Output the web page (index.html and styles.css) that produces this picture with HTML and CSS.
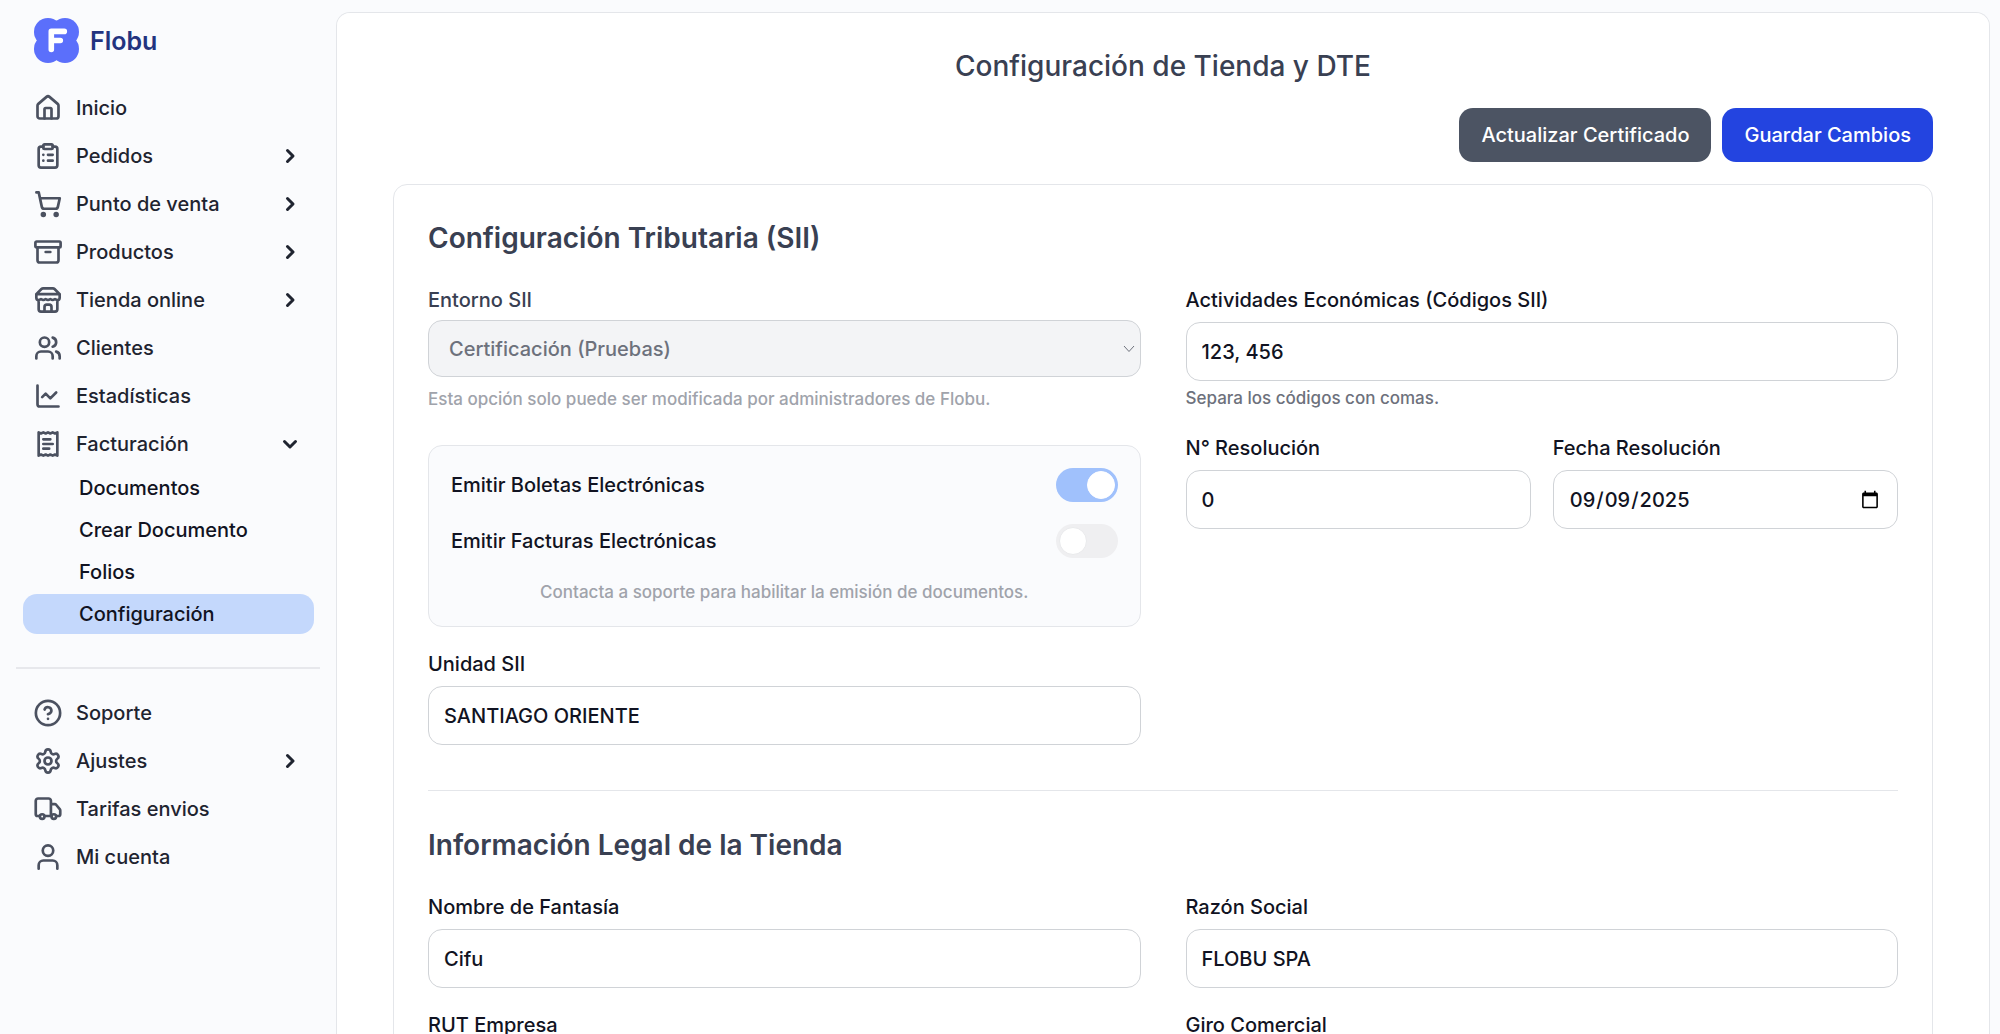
FILE: index.html
```html
<!DOCTYPE html>
<html lang="es">
<head>
<meta charset="utf-8">
<meta name="viewport" content="width=device-width, initial-scale=1">
<title>Flobu - Configuración</title>
<link rel="stylesheet" href="styles.css">
</head>
<body>
<div class="app">
  <aside class="sidebar">
    <a class="brand" href="#">
      <svg class="brand-mark" viewBox="0 0 45 45" aria-hidden="true">
        <g fill="#5b6ffb"><circle cx="14" cy="14" r="14"/><circle cx="31" cy="14" r="14"/><circle cx="14" cy="31" r="14"/><circle cx="31" cy="31" r="14"/></g>
        <path d="M17.300 31.500V13.400H30.300M17.300 22.500H26.300" fill="none" stroke="#fff" stroke-width="5.600" stroke-linecap="round" stroke-linejoin="round"/>
      </svg>
      <span>Flobu</span>
    </a>
    <nav class="menu" aria-label="Principal">
      <a class="item" href="#">
        <svg class="icon" viewBox="0 0 24 24"><path d="M15 21v-8a1 1 0 0 0-1-1h-4a1 1 0 0 0-1 1v8"/><path d="M3 10a2 2 0 0 1 .709-1.528l7-5.999a2 2 0 0 1 2.582 0l7 5.999A2 2 0 0 1 21 10v9a2 2 0 0 1-2 2H5a2 2 0 0 1-2-2z"/></svg>
        <span>Inicio</span>
      </a>
      <button class="item" type="button">
        <svg class="icon" viewBox="0 0 24 24"><rect width="8" height="4" x="8" y="2" rx="1"/><path d="M16 4h2a2 2 0 0 1 2 2v14a2 2 0 0 1-2 2H6a2 2 0 0 1-2-2V6a2 2 0 0 1 2-2h2M12 11h4M12 16h4M8 11h.01M8 16h.01"/></svg>
        <span>Pedidos</span>
        <svg class="chevron" viewBox="0 0 24 24"><path d="m9.500 6.500 5.500 5.500-5.500 5.500"/></svg>
      </button>
      <button class="item" type="button">
        <svg class="icon" viewBox="0 0 24 24"><circle cx="8" cy="21" r="1.200"/><circle cx="19" cy="21" r="1.200"/><path d="M2.050 2.050h2l2.660 12.420a2 2 0 0 0 2 1.580h9.780a2 2 0 0 0 1.950-1.570l1.650-7.430H5.120"/></svg>
        <span>Punto de venta</span>
        <svg class="chevron" viewBox="0 0 24 24"><path d="m9.500 6.500 5.500 5.500-5.500 5.500"/></svg>
      </button>
      <button class="item" type="button">
        <svg class="icon" viewBox="0 0 24 24"><rect width="21.600" height="5" x="1.200" y="3" rx="1"/><path d="M3 8v11a2 2 0 0 0 2 2h14a2 2 0 0 0 2-2V8M10 12h4"/></svg>
        <span>Productos</span>
        <svg class="chevron" viewBox="0 0 24 24"><path d="m9.500 6.500 5.500 5.500-5.500 5.500"/></svg>
      </button>
      <button class="item" type="button">
        <svg class="icon" viewBox="0 0 24 24"><path d="m2 7 4.410-4.410A2 2 0 0 1 7.830 2h8.340a2 2 0 0 1 1.420.590L22 7M4 12v8a2 2 0 0 0 2 2h12a2 2 0 0 0 2-2v-8M15 22v-4a2 2 0 0 0-2-2h-2a2 2 0 0 0-2 2v4M2 7h20M22 7v3a2 2 0 0 1-2 2 2.700 2.700 0 0 1-1.590-.630.700.700 0 0 0-.820 0A2.700 2.700 0 0 1 16 12a2.700 2.700 0 0 1-1.590-.630.700.700 0 0 0-.820 0A2.700 2.700 0 0 1 12 12a2.700 2.700 0 0 1-1.590-.630.700.700 0 0 0-.820 0A2.700 2.700 0 0 1 8 12a2.700 2.700 0 0 1-1.590-.630.700.700 0 0 0-.820 0A2.700 2.700 0 0 1 4 12a2 2 0 0 1-2-2V7"/></svg>
        <span>Tienda online</span>
        <svg class="chevron" viewBox="0 0 24 24"><path d="m9.500 6.500 5.500 5.500-5.500 5.500"/></svg>
      </button>
      <a class="item" href="#">
        <svg class="icon" viewBox="0 0 24 24"><path d="M16 21v-2a4 4 0 0 0-4-4H6a4 4 0 0 0-4 4v2M22 21v-2a4 4 0 0 0-3-3.870M16 3.130a4 4 0 0 1 0 7.750"/><circle cx="9" cy="7" r="4"/></svg>
        <span>Clientes</span>
      </a>
      <a class="item" href="#">
        <svg class="icon" viewBox="0 0 24 24"><path d="M3 3v16a2 2 0 0 0 2 2h16"/><path d="m19 9-5 5-4-4-3 3"/></svg>
        <span>Estadísticas</span>
      </a>
      <button class="item" type="button" aria-expanded="true">
        <svg class="icon" viewBox="0 0 24 24"><path d="M4 2v20l2-1 2 1 2-1 2 1 2-1 2 1 2-1 2 1V2l-2 1-2-1-2 1-2-1-2 1-2-1-2 1ZM14 8H8M16 12H8M13 16H8"/></svg>
        <span>Facturación</span>
        <svg class="chevron" viewBox="0 0 24 24"><path d="m6.500 9.500 5.500 5.500 5.500-5.500"/></svg>
      </button>
      <div class="submenu">
        <a class="subitem" href="#">Documentos</a>
        <a class="subitem" href="#">Crear Documento</a>
        <a class="subitem" href="#">Folios</a>
        <a class="subitem current" href="#" aria-current="page">Configuración</a>
      </div>
    </nav>
    <nav class="menu secondary" aria-label="Cuenta">
      <a class="item" href="#">
        <svg class="icon" viewBox="0 0 24 24"><circle cx="12" cy="12" r="10.400"/><path d="M9.090 9a3 3 0 0 1 5.830 1c0 2-3 3-3 3M12 17h.01"/></svg>
        <span>Soporte</span>
      </a>
      <button class="item" type="button">
        <svg class="icon" viewBox="0 0 24 24"><path d="M9.671 4.136a2.340 2.340 0 0 1 4.659 0 2.340 2.340 0 0 0 3.319 1.915 2.340 2.340 0 0 1 2.330 4.033 2.340 2.340 0 0 0 0 3.831 2.340 2.340 0 0 1-2.330 4.033 2.340 2.340 0 0 0-3.319 1.915 2.340 2.340 0 0 1-4.659 0 2.340 2.340 0 0 0-3.320-1.915 2.340 2.340 0 0 1-2.330-4.033 2.340 2.340 0 0 0 0-3.831A2.340 2.340 0 0 1 6.350 6.051a2.340 2.340 0 0 0 3.319-1.915"/><circle cx="12" cy="12" r="3"/></svg>
        <span>Ajustes</span>
        <svg class="chevron" viewBox="0 0 24 24"><path d="m9.500 6.500 5.500 5.500-5.500 5.500"/></svg>
      </button>
      <a class="item" href="#">
        <svg class="icon" viewBox="0 0 24 24"><path d="M14.500 18V5a2 2 0 0 0-2-2h-9a2 2 0 0 0-2 2v11.500A1.500 1.500 0 0 0 3 18h2M9 18h6M19 18h2a1.500 1.500 0 0 0 1.500-1.500v-3.200a2 2 0 0 0-.44-1.250l-3.100-3.700a1.500 1.500 0 0 0-1.150-.550H14.500"/><circle cx="7" cy="18.500" r="2"/><circle cx="17" cy="18.500" r="2"/></svg>
        <span>Tarifas envios</span>
      </a>
      <a class="item" href="#">
        <svg class="icon" viewBox="0 0 24 24"><path d="M20 22v-3a4 4 0 0 0-4-4H8a4 4 0 0 0-4 4v3"/><circle cx="12" cy="6.500" r="4.500"/></svg>
        <span>Mi cuenta</span>
      </a>
    </nav>
  </aside>

  <main class="panel">
    <h1 class="page-title">Configuración de Tienda y DTE</h1>
    <div class="actions">
      <button class="button muted" type="button">Actualizar Certificado</button>
      <button class="button primary" type="submit" form="store-form">Guardar Cambios</button>
    </div>
    <form class="card" id="store-form">
      <section class="section">
        <h2 class="section-title">Configuración Tributaria (SII)</h2>
        <div class="columns">
          <div class="column">
            <div class="environment">
              <label class="label soft" for="environment">Entorno SII</label>
              <div class="select-wrap">
                <select class="select" id="environment" disabled>
                  <option>Certificación (Pruebas)</option>
                </select>
                <svg class="select-arrow" viewBox="0 0 12 8" aria-hidden="true"><path d="m1 1 5 5.500 5-5.500"/></svg>
              </div>
              <p class="hint light">Esta opción solo puede ser modificada por administradores de Flobu.</p>
            </div>
            <div class="issuing">
              <label class="switch-row">Emitir Boletas Electrónicas
                <input class="switch" type="checkbox" checked disabled>
              </label>
              <label class="switch-row">Emitir Facturas Electrónicas
                <input class="switch" type="checkbox" disabled>
              </label>
              <p class="hint light centered">Contacta a soporte para habilitar la emisión de documentos.</p>
            </div>
            <div class="field">
              <label class="label" for="unit">Unidad SII</label>
              <input class="input" id="unit" type="text" value="SANTIAGO ORIENTE">
            </div>
          </div>
          <div class="column">
            <div class="field">
              <label class="label" for="activities">Actividades Económicas (Códigos SII)</label>
              <input class="input" id="activities" type="text" value="123, 456">
              <p class="hint close">Separa los códigos con comas.</p>
            </div>
            <div class="pair">
              <div class="field">
                <label class="label" for="resolution">N° Resolución</label>
                <input class="input" id="resolution" type="text" inputmode="numeric" value="0">
              </div>
              <div class="field">
                <label class="label" for="resolution-date">Fecha Resolución</label>
                <input class="input" id="resolution-date" type="date" value="2025-09-09">
              </div>
            </div>
          </div>
        </div>
      </section>
      <section class="section divided">
        <h2 class="section-title">Información Legal de la Tienda</h2>
        <div class="columns">
          <div class="field">
            <label class="label" for="trade-name">Nombre de Fantasía</label>
            <input class="input" id="trade-name" type="text" value="Cifu">
          </div>
          <div class="field">
            <label class="label" for="legal-name">Razón Social</label>
            <input class="input" id="legal-name" type="text" value="FLOBU SPA">
          </div>
          <div class="field">
            <label class="label" for="rut">RUT Empresa</label>
            <input class="input" id="rut" type="text">
          </div>
          <div class="field">
            <label class="label" for="business">Giro Comercial</label>
            <input class="input" id="business" type="text">
          </div>
        </div>
      </section>
    </form>
  </main>
</div>
</body>
</html>
```
FILE: styles.css
```css
*, *::before, *::after { box-sizing: border-box; }

body {
  margin: 0;
  background: #fafbfd;
  color: #111322;
  font: 500 20px/28px Inter, "Liberation Sans", sans-serif;
}

h1, h2, p { margin: 0; }
a { color: inherit; text-decoration: none; }
button, input, select { font: inherit; color: inherit; }

.app {
  display: flex;
  height: 100vh;
}

/* Sidebar */
.sidebar {
  flex: 0 0 336px;
  padding: 18px 16px 0;
  color: #1f2430;
}
.brand {
  display: flex;
  align-items: center;
  gap: 11px;
  margin: 0 0 21px 18px;
  color: #22337f;
  font-size: 25px;
  font-weight: 600;
}
.brand-mark { width: 45px; height: 45px; }
.menu { display: flex; flex-direction: column; }
.item {
  display: flex;
  align-items: center;
  gap: 14px;
  padding: 10px 18px;
  border: 0;
  background: none;
  text-align: left;
  cursor: pointer;
}
.icon, .chevron {
  flex: none;
  fill: none;
  stroke: #4b5160;
  stroke-width: 2.3;
  stroke-linecap: round;
  stroke-linejoin: round;
}
.icon { width: 28px; height: 28px; }
.chevron {
  width: 24px;
  height: 24px;
  margin-left: auto;
  stroke: #1f2430;
  stroke-width: 3;
}
.submenu {
  display: flex;
  flex-direction: column;
  gap: 2px;
  padding: 0 6px 0 7px;
  color: #111322;
}
.subitem {
  padding: 6px 56px;
  border-radius: 14px;
}
.current { background: #c4d8fc; }
.secondary {
  margin-top: 33px;
  padding-top: 20px;
  border-top: 2px solid #e7e8ec;
}

/* Main panel */
.panel {
  flex: 1;
  min-width: 0;
  margin: 12px 10px 0 0;
  padding: 35px 56px;
  overflow-y: auto;
  scrollbar-width: none;
  border: 1px solid #e4e6ea;
  border-bottom: 0;
  border-radius: 14px 14px 0 0;
  background: #fff;
}
.page-title {
  color: #394052;
  font-size: 28px;
  font-weight: 500;
  line-height: 36px;
  text-align: center;
}
.actions {
  display: flex;
  justify-content: flex-end;
  gap: 11px;
  margin: 24px 0 22px;
}
.button {
  padding: 13px 22px;
  border: 0;
  border-radius: 14px;
  color: #fff;
  cursor: pointer;
}
.muted { background: #4c5463; }
.primary { background: #2344e0; }

.card {
  padding: 34px;
  border: 1px solid #e4e6ea;
  border-radius: 14px;
}
.divided {
  margin-top: 45px;
  padding-top: 35px;
  border-top: 1px solid #e4e6ea;
}
.section-title {
  margin-bottom: 29px;
  color: #394052;
  font-size: 28px;
  font-weight: 600;
  line-height: 38px;
}
.columns, .pair {
  display: grid;
  grid-template-columns: repeat(2, minmax(0, 1fr));
  gap: 23px 45px;
}
.pair { gap: 22px; margin-top: 24px; }

/* Fields */
.label { display: block; margin-bottom: 8px; }
.soft { margin-bottom: 6px; color: #394052; }
.input, .select {
  display: block;
  width: 100%;
  height: 59px;
  padding: 0 15px;
  border: 1px solid #d0d3d7;
  border-radius: 14px;
  background: #fff;
}
.select-wrap { position: relative; }
.select {
  height: 57px;
  padding: 0 20px;
  appearance: none;
  background: #f3f4f6;
  color: #6d717c;
  opacity: 1;
}
.select-arrow {
  position: absolute;
  top: 25px;
  right: 6px;
  width: 12px;
  height: 8px;
  fill: none;
  stroke: #6d717c;
}
.hint {
  margin-top: 10px;
  color: #6d717c;
  font-size: 17px;
  line-height: 24px;
}
.light { color: #a0a3ab; }
.close { margin-top: 5px; }
.centered { margin-top: 0; text-align: center; }

.issuing {
  display: flex;
  flex-direction: column;
  gap: 22px;
  margin: 34px 0 23px;
  padding: 22px;
  border: 1px solid #e4e6ea;
  border-radius: 14px;
  background: #fafbfd;
}
.switch-row {
  display: flex;
  align-items: center;
  justify-content: space-between;
}
.switch {
  display: flex;
  align-items: center;
  width: 62px;
  height: 34px;
  margin: 0;
  padding: 3px;
  appearance: none;
  border-radius: 17px;
  background: #efeff1;
}
.switch::before {
  content: "";
  width: 28px;
  height: 28px;
  border: 1px solid #e9eaec;
  border-radius: 50%;
  background: #fff;
}
.switch:checked { justify-content: flex-end; background: #a0c1fc; }
.switch:checked::before { border-color: #fff; }
```
